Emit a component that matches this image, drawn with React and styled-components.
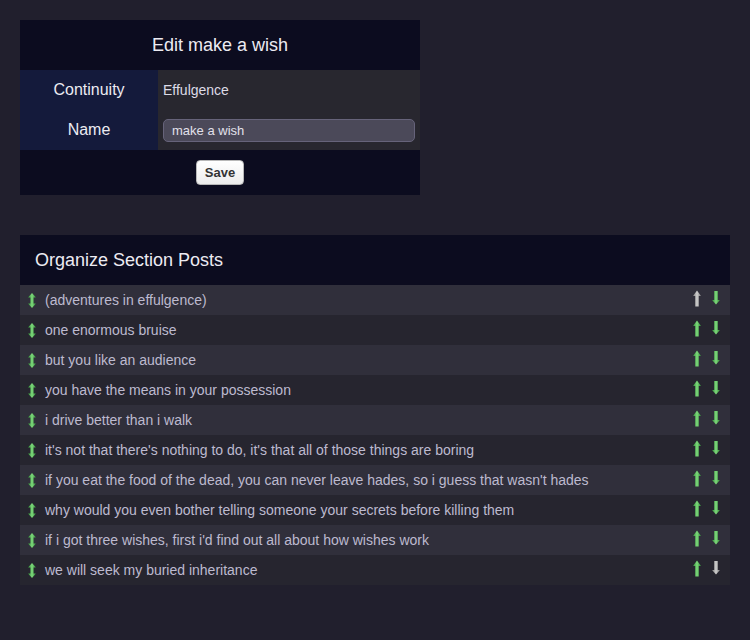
import React from 'react';
import styled, { createGlobalStyle } from 'styled-components';

const GlobalStyle = createGlobalStyle`
  html, body {
    margin: 0;
    padding: 0;
    background: #211f2d;
    font-family: "Liberation Sans", Arial, sans-serif;
  }
`;

const posts = [
  '(adventures in effulgence)',
  'one enormous bruise',
  'but you like an audience',
  'you have the means in your possession',
  'i drive better than i walk',
  "it's not that there's nothing to do, it's that all of those things are boring",
  "if you eat the food of the dead, you can never leave hades, so i guess that wasn't hades",
  'why would you even bother telling someone your secrets before killing them',
  "if i got three wishes, first i'd find out all about how wishes work",
  'we will seek my buried inheritance',
];

const Grad = ({ id, active }) => (
  <defs>
    <linearGradient id={id} x1="0" x2="1" y1="0" y2="0">
      <stop offset="0" stopColor={active ? '#2f8a34' : '#7c7c7c'} />
      <stop offset="0.5" stopColor={active ? '#7fd97d' : '#cfcfcf'} />
      <stop offset="1" stopColor={active ? '#2f8a34' : '#7c7c7c'} />
    </linearGradient>
  </defs>
);

const UpArrow = ({ active }) => (
  <ArrowSvg width="10" height="17" viewBox="0 0 10 17" offset={0}>
    <Grad id={active ? 'ug' : 'ugg'} active={active} />
    <path d="M5 0.5 L9 6 L6.8 6 L6.8 16.5 L3.2 16.5 L3.2 6 L1 6 Z" fill={`url(#${active ? 'ug' : 'ugg'})`} />
  </ArrowSvg>
);

const DownArrow = ({ active }) => (
  <ArrowSvg width="10" height="14" viewBox="0 0 10 14" offset={1}>
    <Grad id={active ? 'dg' : 'dgg'} active={active} />
    <path d="M5 13.5 L9 9 L6.8 9 L6.8 0 L3.2 0 L3.2 9 L1 9 Z" fill={`url(#${active ? 'dg' : 'dgg'})`} />
  </ArrowSvg>
);

const DragIcon = () => (
  <svg width="10" height="15" viewBox="0 0 10 15">
    <Grad id="drag" active />
    <path
      d="M5 0 L9 4.5 L6.6 4.5 L6.6 10.5 L9 10.5 L5 15 L1 10.5 L3.4 10.5 L3.4 4.5 L1 4.5 Z"
      fill="url(#drag)"
    />
  </svg>
);

const App = () => {
  return (
    <>
      <GlobalStyle />
      <Page>
        <EditPanel>
          <PanelTitle center>Edit make a wish</PanelTitle>
          <FieldRow>
            <Label>Continuity</Label>
            <Value>Effulgence</Value>
          </FieldRow>
          <FieldRow>
            <Label>Name</Label>
            <Value>
              <Input defaultValue="make a wish" />
            </Value>
          </FieldRow>
          <Footer>
            <SaveButton>Save</SaveButton>
          </Footer>
        </EditPanel>

        <PostsPanel>
          <PanelTitle>Organize Section Posts</PanelTitle>
          {posts.map((p, i) => (
            <PostRow key={p} odd={i % 2 === 0}>
              <Handle>
                <DragIcon />
              </Handle>
              <PostTitle>{p}</PostTitle>
              <Controls>
                <UpArrow active={i !== 0} />
                <DownArrow active={i !== posts.length - 1} />
              </Controls>
            </PostRow>
          ))}
        </PostsPanel>
      </Page>
    </>
  );
};

const Page = styled.div`
  padding: 20px;
  display: flex;
  flex-direction: column;
  gap: 40px;
  min-height: 600px;
`;

const EditPanel = styled.div`
  width: 400px;
  background: #0c0c1f;
`;

const PostsPanel = styled.div`
  width: 710px;
  background: #0c0c1f;
`;

const PanelTitle = styled.div`
  height: 50px;
  display: flex;
  align-items: center;
  justify-content: ${(props) => (props.center ? 'center' : 'flex-start')};
  padding: ${(props) => (props.center ? '0' : '0 15px')};
  color: #ecebf2;
  font-size: 18px;
`;

const FieldRow = styled.div`
  display: flex;
  height: 40px;
`;

const Label = styled.div`
  width: 138px;
  background: #141a3b;
  color: #ecebf2;
  font-size: 16px;
  display: flex;
  align-items: center;
  justify-content: center;
`;

const Value = styled.div`
  flex: 1;
  background: #28272f;
  color: #dddbe6;
  font-size: 14px;
  display: flex;
  align-items: center;
  padding: 0 5px;
`;

const Input = styled.input`
  width: 100%;
  height: 23px;
  box-sizing: border-box;
  background: #4b4959;
  border: 1px solid #66637a;
  border-radius: 5px;
  color: #e2e0ea;
  font-family: "Liberation Sans", Arial, sans-serif;
  font-size: 13px;
  padding: 0 8px;
  outline: none;
`;

const Footer = styled.div`
  height: 45px;
  display: flex;
  align-items: center;
  justify-content: center;
`;

const SaveButton = styled.button`
  width: 48px;
  height: 25px;
  background: linear-gradient(#ffffff, #ececec);
  border: 1px solid #b8b8b8;
  border-radius: 4px;
  color: #333;
  font-family: "Liberation Sans", Arial, sans-serif;
  font-weight: bold;
  font-size: 13px;
  padding: 0;
`;

const PostRow = styled.div`
  height: 30px;
  display: flex;
  align-items: center;
  background: ${(props) => (props.odd ? '#302f3b' : '#26252f')};
  padding: 0 9px 0 7px;
`;

const Handle = styled.div`
  width: 10px;
  height: 15px;
  margin-right: 8px;
  display: flex;
`;

const PostTitle = styled.div`
  flex: 1;
  color: #bdbacf;
  font-size: 14px;
`;

const Controls = styled.div`
  align-self: stretch;
  box-sizing: border-box;
  padding-top: 5px;
  display: flex;
  gap: 9px;
  align-items: flex-start;
`;

const ArrowSvg = styled.svg`
  margin-top: ${(props) => props.offset}px;
`;

export default App;
